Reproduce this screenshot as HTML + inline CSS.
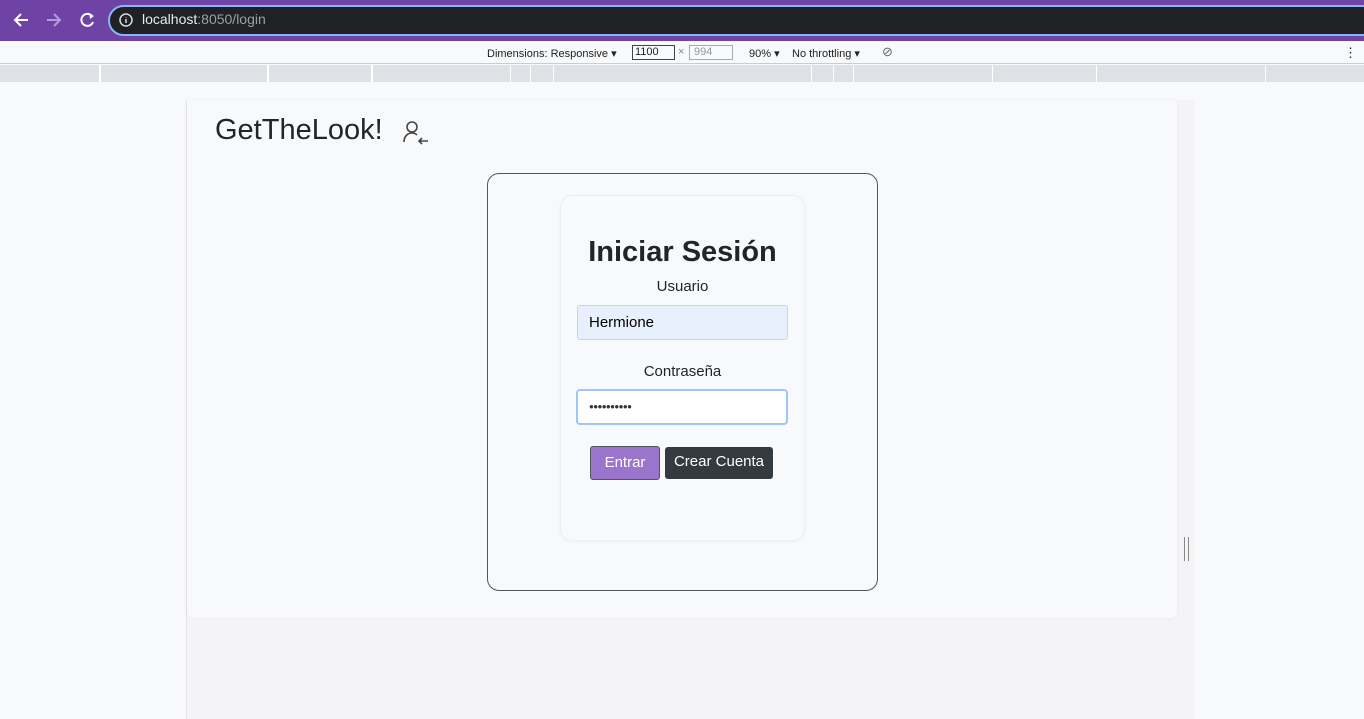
<!DOCTYPE html>
<html><head><meta charset="utf-8"><style>
*{box-sizing:border-box;margin:0;padding:0}
body{width:1364px;height:719px;overflow:hidden;background:#f8f9fa;font-family:"Liberation Sans",sans-serif;position:relative}
.abs{position:absolute}
</style></head><body>
<div class="abs" style="left:0;top:0;width:1364px;height:41px;background:#6f42a5"></div>
<div class="abs" style="left:108px;top:5px;width:1270px;height:31px;border-radius:16px;background:#202124;border:2px solid #8ab4f8"></div>
<svg class="abs" style="left:10px;top:10px" width="90" height="20" viewBox="0 0 90 20">
<path d="M18 10H5M11 4L5 10L11 16" stroke="#fff" stroke-width="2" fill="none"/>
<path d="M37 10H50M44 4L50 10L44 16" stroke="#b39ddb" stroke-width="2" fill="none"/>
<path d="M82 6A6 6 0 1 0 83 12" stroke="#fff" stroke-width="2" fill="none"/><path d="M79 3L84 6L80 9Z" fill="#fff"/>
</svg>
<svg class="abs" style="left:119px;top:13px" width="14" height="14"><circle cx="7" cy="7" r="6" stroke="#ddd" stroke-width="1.5" fill="none"/><path d="M7 6V10M7 4V4.5" stroke="#ddd" stroke-width="1.5"/></svg>
<div class="abs" style="left:142px;top:11px;font-size:14px;color:#e8eaed">localhost<span style="color:#9aa0a6">:8050/login</span></div>
<div class="abs" style="left:0;top:41px;width:1364px;height:23px;background:#f8f9fa;border-bottom:1px solid #ccc;font-size:11px;color:#222">
<span class="abs" style="left:487px;top:6px">Dimensions: Responsive ▾</span>
<span class="abs" style="left:632px;top:4px;width:43px;height:15px;border:1px solid #444;padding-left:2px;line-height:13px">1100</span>
<span class="abs" style="left:678px;top:5px;color:#888">×</span>
<span class="abs" style="left:689px;top:4px;width:44px;height:15px;border:1px solid #aaa;padding-left:4px;line-height:13px;color:#999">994</span>
<span class="abs" style="left:749px;top:6px">90% ▾</span>
<span class="abs" style="left:792px;top:6px">No throttling ▾</span>
<span class="abs" style="left:882px;top:3px;font-size:13px;color:#666">⊘</span>
<span class="abs" style="left:1344px;top:4px;font-size:13px">⋮</span>
</div>
<div class="abs" style="left:0;top:65px;width:1364px;height:17px;background:#dee1e6"></div>
<div class="abs" style="left:99px;top:65px;width:2px;height:17px;background:#fff"></div>
<div class="abs" style="left:267px;top:65px;width:2px;height:17px;background:#fff"></div>
<div class="abs" style="left:371px;top:65px;width:2px;height:17px;background:#fff"></div>
<div class="abs" style="left:510px;top:65px;width:1px;height:17px;background:#fff"></div>
<div class="abs" style="left:530px;top:65px;width:1px;height:17px;background:#fff"></div>
<div class="abs" style="left:553px;top:65px;width:1px;height:17px;background:#fff"></div>
<div class="abs" style="left:811px;top:65px;width:1px;height:17px;background:#fff"></div>
<div class="abs" style="left:833px;top:65px;width:1px;height:17px;background:#fff"></div>
<div class="abs" style="left:853px;top:65px;width:1px;height:17px;background:#fff"></div>
<div class="abs" style="left:992px;top:65px;width:1px;height:17px;background:#fff"></div>
<div class="abs" style="left:1096px;top:65px;width:1px;height:17px;background:#fff"></div>
<div class="abs" style="left:1265px;top:65px;width:1px;height:17px;background:#fff"></div>
<div class="abs" style="left:186px;top:100px;width:1008px;height:619px;background:#f4f4f6;border-left:1px solid #e6e6e6"></div>
<div class="abs" style="left:187px;top:100px;width:990px;height:518px;background:#f8f9fa;border-radius:0 0 6px 6px;box-shadow:0 0 3px rgba(0,0,0,.05)"></div>
<div class="abs" style="left:1184px;top:537px;width:5px;height:24px;border-left:1px solid #888;border-right:1px solid #888"></div>
<div class="abs" style="left:215px;top:114px;font-size:29px;color:#212529">GetTheLook!</div>
<svg class="abs" style="left:402px;top:120px" width="28" height="26" viewBox="0 0 28 26"><circle cx="10" cy="7" r="5" stroke="#444" stroke-width="1.6" fill="none"/><path d="M2 22C2 16 6 13 10 13C12 13 14 14 15 15" stroke="#444" stroke-width="1.6" fill="none"/><path d="M26 21H17M20 18L17 21L20 24" stroke="#444" stroke-width="1.6" fill="none"/></svg>
<div class="abs" style="left:487px;top:173px;width:391px;height:418px;border:1px solid #555;border-radius:12px"></div>
<div class="abs" style="left:560px;top:195px;width:245px;height:346px;border:1px solid #eceef0;border-radius:12px;box-shadow:0 1px 3px rgba(0,0,0,.04)"></div>
<div class="abs" style="left:560px;top:236px;width:245px;text-align:center;font-size:29px;font-weight:bold;color:#212529">Iniciar Sesión</div>
<div class="abs" style="left:560px;top:278px;width:245px;text-align:center;font-size:15px;color:#212529">Usuario</div>
<div class="abs" style="left:577px;top:305px;width:211px;height:35px;background:#e8f0fe;border:1px solid #ced4da;border-radius:3px;font-size:15px;padding:8px 11px;color:#000">Hermione</div>
<div class="abs" style="left:560px;top:363px;width:245px;text-align:center;font-size:15px;color:#212529">Contraseña</div>
<div class="abs" style="left:576px;top:389px;width:212px;height:36px;background:#fff;border:2px solid #9ec5fe;border-radius:4px;font-size:8px;padding:11px 11px;color:#333;letter-spacing:-0.6px">●●●●●●●●●●</div>
<div class="abs" style="left:590px;top:446px;width:70px;height:34px;background:#9b74cc;border:1px solid #555;border-radius:3px;color:#fff;font-size:15px;text-align:center;line-height:31px">Entrar</div>
<div class="abs" style="left:665px;top:447px;width:108px;height:32px;background:#343a40;border-radius:3px;color:#fff;font-size:15px;text-align:center;line-height:29px">Crear Cuenta</div>
</body></html>
